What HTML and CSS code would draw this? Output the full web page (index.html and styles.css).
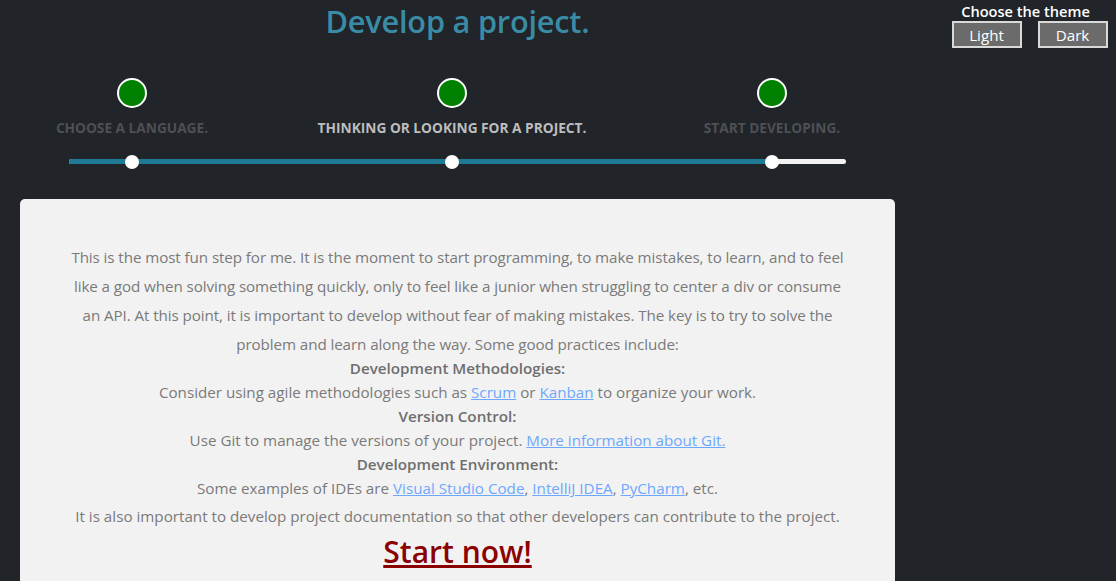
FILE: index.html
```html
<!DOCTYPE html>
<html lang="en">
<head>
<meta charset="utf-8">
<title>Develop a project.</title>
<link rel="stylesheet" href="styles.css">
</head>
<body>
<div class="page">
  <main class="main">
    <h1 class="title">Develop a project.</h1>
    <div class="steps">
      <div class="step">
        <span class="dot"></span>
        <span class="label">Choose a language.</span>
      </div>
      <div class="step active">
        <span class="dot"></span>
        <span class="label">Thinking or looking for a project.</span>
      </div>
      <div class="step">
        <span class="dot"></span>
        <span class="label">Start developing.</span>
      </div>
    </div>
    <div class="track">
      <div class="fill"></div>
      <span class="thumb t1"></span>
      <span class="thumb t2"></span>
      <span class="thumb t3"></span>
    </div>
    <section class="card">
      <p class="intro">This is the most fun step for me. It is the moment to start programming, to make mistakes, to learn, and to feel like a god when solving something quickly, only to feel like a junior when struggling to center a div or consume an API. At this point, it is important to develop without fear of making mistakes. The key is to try to solve the problem and learn along the way. Some good practices include:</p>
      <div class="practices">
        <div class="ph">Development Methodologies:</div>
        <div>Consider using agile methodologies such as <a href="#">Scrum</a> or <a href="#">Kanban</a> to organize your work.</div>
        <div class="ph">Version Control:</div>
        <div>Use Git to manage the versions of your project. <a href="#">More information about Git.</a></div>
        <div class="ph">Development Environment:</div>
        <div>Some examples of IDEs are <a href="#">Visual Studio Code</a>, <a href="#">IntelliJ IDEA</a>, <a href="#">PyCharm</a>, etc.</div>
      </div>
      <p class="outro">It is also important to develop project documentation so that other developers can contribute to the project.</p>
      <a class="start" href="#">Start now!</a>
    </section>
  </main>
  <aside class="theme">
    <div class="theme-title">Choose the theme</div>
    <div class="theme-buttons">
      <button class="tbtn">Light</button>
      <button class="tbtn">Dark</button>
    </div>
  </aside>
</div>
</body>
</html>
```

FILE: styles.css
```css
html, body {
  margin: 0;
  padding: 0;
  background: #212429;
  height: 100%;
  overflow: hidden;
}
body {
  font-family: "Segoe UI", "Open Sans", sans-serif;
}
.page {
  display: flex;
  align-items: flex-start;
}
.main {
  width: 875px;
  margin-left: 20px;
  flex: none;
}
.title {
  margin: 0;
  padding-top: 0;
  text-align: center;
  font-size: 30.7px;
  font-weight: 600;
  color: #3a8ca6;
  line-height: 42px;
  letter-spacing: -0.2px;
}
.steps {
  display: flex;
  width: 960px;
  margin-left: -48px;
  margin-top: 36px;
}
.step {
  flex: 1;
  display: flex;
  flex-direction: column;
  align-items: center;
}
.dot {
  width: 26px;
  height: 26px;
  border-radius: 50%;
  background: #008000;
  border: 2px solid #ffffff;
}
.label {
  margin-top: 10px;
  font-size: 13.7px;
  font-weight: 700;
  text-transform: uppercase;
  color: #4e5053;
  line-height: 19px;
}
.step.active .label {
  color: #bdbdbd;
}
.track {
  position: relative;
  margin-top: 22px;
  margin-left: 49px;
  width: 777px;
  height: 5px;
  border-radius: 3px;
  background: #f2f2f2;
}
.fill {
  width: 703px;
  height: 5px;
  border-radius: 3px 0 0 3px;
  background: #1f7894;
}
.thumb {
  position: absolute;
  top: -4px;
  width: 14px;
  height: 14px;
  border-radius: 50%;
  background: #ffffff;
  margin-left: -7px;
}
.t1 { left: 63px; }
.t2 { left: 383px; }
.t3 { left: 703px; }
.card {
  margin-top: 35px;
  background: #f2f2f2;
  border-radius: 5px;
  padding: 44px 46px 40px;
  text-align: center;
  color: #7a7a7a;
  font-size: 15.2px;
}
.intro {
  margin: 0;
  line-height: 29px;
  letter-spacing: -0.09px;
}
.practices {
  margin-top: -3px;
  line-height: 24px;
}
.ph {
  font-weight: 600;
  color: #6e6e6e;
}
.card a {
  color: #6ea8fe;
}
.outro {
  margin: 2px 0 0;
  line-height: 29px;
}
.start {
  display: inline-block;
  margin-top: 0;
  font-size: 30px;
  font-weight: 600;
  line-height: 42px;
  color: #8b0000 !important;
}
.theme {
  margin-left: 57px;
  margin-top: 2px;
  display: flex;
  flex-direction: column;
  align-items: center;
  width: 155px;
}
.theme-title {
  color: #ffffff;
  font-size: 14.6px;
  line-height: 19px;
  font-weight: 600;
  margin-left: -8px;
}
.theme-buttons {
  display: flex;
  gap: 16px;
}
.tbtn {
  width: 70px;
  height: 27px;
  padding: 0;
  background: #6b6b6b;
  border: 2px solid #d9d9d9;
  color: #ffffff;
  font-family: "Segoe UI", "Open Sans", sans-serif;
  font-size: 15.2px;
  line-height: 22px;
}
```
